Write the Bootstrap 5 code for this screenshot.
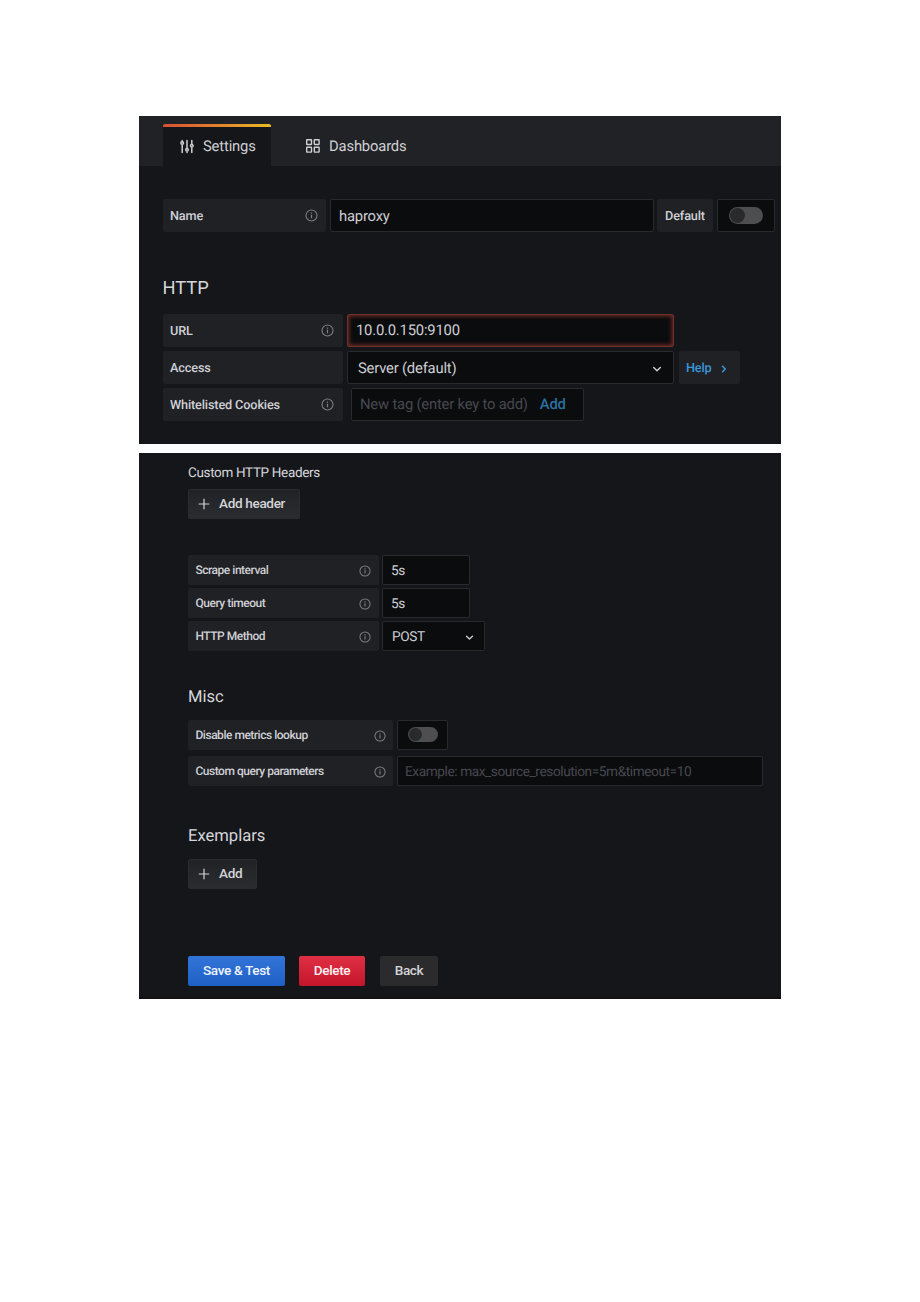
<!DOCTYPE html>
<html lang="en" data-bs-theme="dark">
<head>
<meta charset="utf-8">
<meta name="viewport" content="width=device-width, initial-scale=1">
<title>Data source settings</title>
<link href="https://cdn.jsdelivr.net/npm/bootstrap@5.3.0/dist/css/bootstrap.min.css" rel="stylesheet">
<style>
  body { background: #fff; font-family: Roboto, "Liberation Sans", sans-serif; color: #d0d1d6; line-height: 1; padding-top: 116px; text-rendering: geometricPrecision; }
  .panel { width: 642px; margin: 0 auto; background: #151619; overflow: hidden; white-space: nowrap; }
  .panel-top { height: 328px; margin-bottom: 9px; --row-h: 33px; --label-fs: 12.7px; --label-ls: -.14px; --label-pt: 3px; --input-fs: 14.8px; --input-ls: -.2px; --input-pt: 1px; }
  .panel-bottom { height: 546px; padding-left: 49px; --row-h: 30px; --label-fs: 12px; --label-ls: -.48px; --label-pt: 0px; --input-fs: 13.7px; --input-ls: -.43px; --input-pt: 3px; border-bottom: 2px solid #141014; }
  .tabs-bar { height: 50px; background: #212225; padding: 8px 0 0 24px; }
  .tab-item { height: 42px; font-size: 14.8px; letter-spacing: -.17px; color: #cfd0d4; padding-top: 2px; }
  .tab-item span { padding-top: 1px; }
  .tab-item.is-active { width: 108px; background: linear-gradient(90deg, #d75134, #e2772e 40%, #e9bb26) top / 100% 3px no-repeat #151619; border-radius: 2px 2px 0 0; padding-left: 17px; }
  .tab-dash { padding-left: 34px; }
  .content-top { padding: 33px 0 0 24px; }
  .field-row { height: var(--row-h); }
  .field-label { height: 100%; background: #202124; border-radius: 2px; padding: var(--label-pt) 9px 0 7px; font-size: var(--label-fs); letter-spacing: var(--label-ls); font-weight: 500; color: #cfd0d6; }
  .panel-bottom .field-label { padding-right: 8px; padding-left: 7.5px; }
  .field-box { height: 100%; background: #0b0c0e; border: 1px solid #292a2e; border-radius: 2px; padding: var(--input-pt) 8px 0; font-size: var(--input-fs); letter-spacing: var(--input-ls); color: #cdced3; }
  .field-box.is-focused { border: 1px solid #70302c; box-shadow: inset 0 0 4px 1px #7a2d29; padding-top: 0; padding-bottom: 1px; }
  .hint { color: #47484e; }
  .blue-link { color: #3b96d8; font-weight: 500; }
  .section-title { font-weight: 400; margin: 0; color: #d6d7da; line-height: 20px; }
  .toggle { background: #4e4e50; border-radius: 20px; width: 34px; height: 17px; padding: 1px; margin-top: -1px; }
  .toggle i { display: block; width: 15px; height: 15px; border-radius: 50%; background: #292a2c; }
  .panel-bottom .toggle { width: 30px; height: 15px; margin-top: -4px; }
  .panel-bottom .toggle i { width: 13px; height: 13px; }
  .action-btn { height: 30px; border: 0; border-radius: 2px; padding: 0 0 2px; font-size: 13.6px; letter-spacing: -.36px; font-weight: 500; line-height: 28px; color: #d3d4d8; }
  .btn-plain { background: linear-gradient(#202226, #2a2c30); border: 1px solid #292b2f; padding: 0 0 0 9px; }
  .btn-plain span { margin: -1px 0 0 9px; padding-bottom: 1px; }
  .btn-save { background: linear-gradient(#3274d9, #1f60c4); color: #eef4ff; width: 97px; }
  .btn-remove { background: linear-gradient(#e02f44, #c4162a); color: #fff0f2; width: 66px; }
  .btn-back { background: #2b2b2d; width: 58px; }
  svg { display: block; fill: none; stroke: currentColor; flex: none; }
  .info { color: #7d7e83; width: 13px; height: 13px; margin-top: -3px; }
  .panel-bottom .info { width: 12px; height: 12px; margin-top: 1px; }
</style>
</head>
<body>
<svg class="d-none">
  <symbol id="info" viewBox="0 0 13 13"><circle cx="6.5" cy="6.5" r="5.5" stroke-width="1.1"/><path d="M6.5 5.8v3.4M6.5 3.6v1.2" stroke-width="1.2"/></symbol>
  <symbol id="chev" viewBox="0 0 10 10"><path d="M1.7 3.5 5 6.7l3.3-3.2" stroke-width="1.5" stroke-linecap="round" stroke-linejoin="round"/></symbol>
  <symbol id="plus" viewBox="0 0 12 12"><path d="M6 1.2v9.6M1.2 6h9.6" stroke-width="1.2" stroke-linecap="round"/></symbol>
</svg>

<section class="panel panel-top">
  <nav class="tabs-bar d-flex">
    <div class="tab-item is-active d-flex align-items-center">
      <svg width="14" height="15" viewBox="0 0 14 15" stroke-width="1.5" stroke-linecap="round"><path d="M2.2 6v7.4M2.2 1.4v1M7 1.4v7M7 13v.4M11.8 1.4v3.4M11.8 9v4.4"/><circle cx="2.2" cy="4" r="1.3"/><circle cx="7" cy="10.8" r="1.3"/><circle cx="11.8" cy="6.8" r="1.3"/></svg>
      <span style="margin-left:9px">Settings</span>
    </div>
    <div class="tab-item tab-dash d-flex align-items-center">
      <svg width="16" height="16" viewBox="0 0 16 16" stroke-width="1.4"><rect x="1.7" y="1.7" width="4.8" height="4.8" rx=".4"/><rect x="9.3" y="1.7" width="4.8" height="4.8" rx=".4"/><rect x="1.7" y="9.3" width="4.8" height="4.8" rx=".4"/><rect x="9.3" y="9.3" width="4.8" height="4.8" rx=".4"/></svg>
      <span style="margin-left:8px">Dashboards</span>
    </div>
  </nav>
  <div class="content-top">
    <div class="field-row d-flex">
      <div class="field-label d-flex align-items-center justify-content-between" style="width:163px;padding-right:8px"><span>Name</span><svg class="info"><use href="#info"/></svg></div>
      <div class="field-box d-flex align-items-center" style="width:324px;margin-left:4px">haproxy</div>
      <div class="field-label d-flex align-items-center" style="width:56px;margin-left:3px;padding-left:8px">Default</div>
      <div class="field-box d-flex align-items-center justify-content-center" style="width:58px;margin-left:4px"><div class="toggle"><i></i></div></div>
    </div>
    <h3 class="section-title" style="font-size:18.3px;margin-top:47px;margin-left:-.5px">HTTP</h3>
    <div class="field-row d-flex" style="margin-top:15px">
      <div class="field-label d-flex align-items-center justify-content-between" style="width:180px"><span>URL</span><svg class="info"><use href="#info"/></svg></div>
      <div class="field-box is-focused d-flex align-items-center" style="width:327px;margin-left:4px">10.0.0.150:9100</div>
    </div>
    <div class="field-row d-flex" style="margin-top:4px">
      <div class="field-label d-flex align-items-center" style="width:180px">Access</div>
      <div class="field-box d-flex align-items-center justify-content-between" style="width:327px;margin-left:4px;padding:1px 11px 0 10px"><span>Server (default)</span><svg width="10" height="10" style="margin-top:2px"><use href="#chev"/></svg></div>
      <div class="field-label d-flex align-items-center blue-link" style="width:61px;margin-left:5px;color:#3b96d8">Help<svg width="8" height="10" viewBox="0 0 8 10" stroke-width="1.5" style="margin:0 0 0 8px"><path d="m2.2 1.8 3 3.2-3 3.2"/></svg></div>
    </div>
    <div class="field-row d-flex" style="margin-top:4px">
      <div class="field-label d-flex align-items-center justify-content-between" style="width:180px"><span>Whitelisted Cookies</span><svg class="info"><use href="#info"/></svg></div>
      <div class="field-box d-flex align-items-center" style="width:233px;margin-left:8px;padding-top:0"><span class="hint">New tag (enter key to add)</span><span class="blue-link" style="margin-left:12px;color:#2b6f9e">Add</span></div>
    </div>
  </div>
</section>

<section class="panel panel-bottom">
  <h4 class="section-title" style="font-size:13.5px;letter-spacing:-.34px;padding-top:10px">Custom HTTP Headers</h4>
  <button class="btn action-btn btn-plain d-flex align-items-center" style="width:112px;margin-top:6px"><svg width="12" height="12"><use href="#plus"/></svg><span>Add header</span></button>

  <div class="field-row d-flex" style="margin-top:36px">
    <div class="field-label d-flex align-items-center justify-content-between" style="width:191px"><span>Scrape interval</span><svg class="info"><use href="#info"/></svg></div>
    <div class="field-box d-flex align-items-center" style="width:88px;margin-left:3px">5s</div>
  </div>
  <div class="field-row d-flex" style="margin-top:3px">
    <div class="field-label d-flex align-items-center justify-content-between" style="width:191px"><span>Query timeout</span><svg class="info"><use href="#info"/></svg></div>
    <div class="field-box d-flex align-items-center" style="width:88px;margin-left:3px">5s</div>
  </div>
  <div class="field-row d-flex" style="margin-top:3px">
    <div class="field-label d-flex align-items-center justify-content-between" style="width:191px"><span>HTTP Method</span><svg class="info"><use href="#info"/></svg></div>
    <div class="field-box d-flex align-items-center justify-content-between" style="width:103px;margin-left:3px;padding-left:9px;padding-right:10px"><span>POST</span><svg width="9" height="9"><use href="#chev"/></svg></div>
  </div>

  <h3 class="section-title" style="font-size:16.6px;margin-top:37px">Misc</h3>
  <div class="field-row d-flex" style="margin-top:12px">
    <div class="field-label d-flex align-items-center justify-content-between" style="width:205px;padding-right:7px"><span>Disable metrics lookup</span><svg class="info"><use href="#info"/></svg></div>
    <div class="field-box d-flex align-items-center justify-content-center" style="width:51px;margin-left:4px"><div class="toggle"><i></i></div></div>
  </div>
  <div class="field-row d-flex" style="margin-top:6px">
    <div class="field-label d-flex align-items-center justify-content-between" style="width:205px;padding-right:7px"><span>Custom query parameters</span><svg class="info"><use href="#info"/></svg></div>
    <div class="field-box d-flex align-items-center hint" style="width:366px;margin-left:4px;padding-left:7px">Example: max_source_resolution=5m&amp;timeout=10</div>
  </div>

  <h3 class="section-title" style="font-size:16.6px;margin-top:41px">Exemplars</h3>
  <button class="btn action-btn btn-plain d-flex align-items-center" style="width:69px;margin-top:12px"><svg width="12" height="12"><use href="#plus"/></svg><span>Add</span></button>

  <div class="d-flex" style="margin-top:67px">
    <button class="btn action-btn btn-save">Save &amp; Test</button>
    <button class="btn action-btn btn-remove" style="margin-left:14px">Delete</button>
    <button class="btn action-btn btn-back" style="margin-left:15px">Back</button>
  </div>
</section>
<script src="https://cdn.jsdelivr.net/npm/bootstrap@5.3.0/dist/js/bootstrap.bundle.min.js"></script>
</body>
</html>
